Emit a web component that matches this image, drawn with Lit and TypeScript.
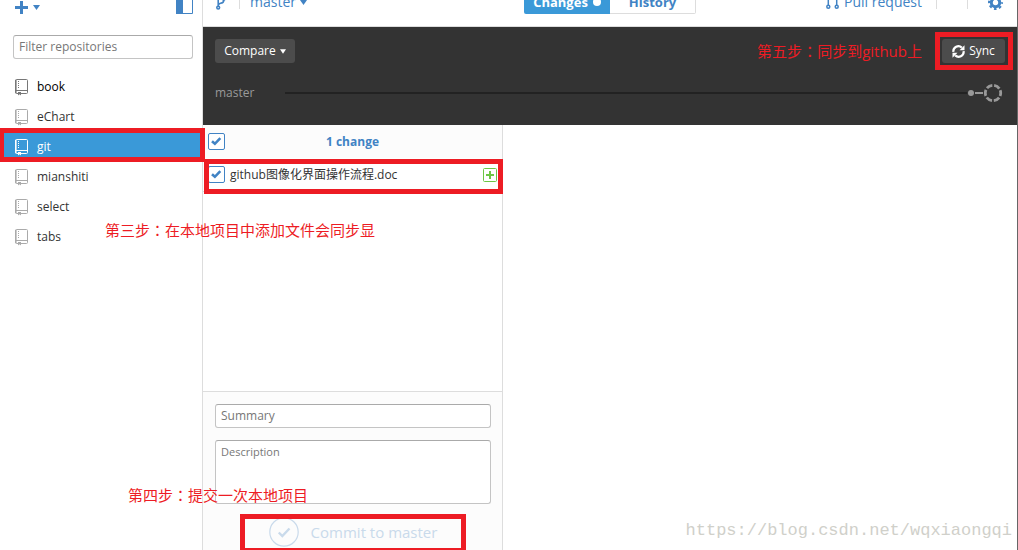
import { LitElement, html, css, svg } from "lit";
import { customElement, property, state } from "lit/decorators.js";
import { classMap } from "lit/directives/class-map.js";

const tick = svg`<path d="M4 8.2 L6.9 10.8 L12.3 5.2" fill="none" stroke="currentColor" stroke-width="2.6"/>`;

@customElement("repo-icon")
class RepoIcon extends LitElement {
  static styles = css`
    :host { display: block; width: 13px; height: 17px; }
    svg { display: block; }
  `;
  render() {
    return html`<svg width="13" height="17" viewBox="0 0 13 17" fill="none" stroke="currentColor" aria-hidden="true">
      <path d="M3 14.5 H1.5 Q0.5 14.5 0.5 13.5 V1.5 Q0.5 0.5 1.5 0.5 H11.5 Q12.5 0.5 12.5 1.5 V13.5 Q12.5 14.5 11.5 14.5 H6"/>
      <path d="M0.8 1 V14" stroke-width="1.6"/>
      <path d="M0.5 11.5 H12.5"/>
      <path d="M3.5 2 V10" stroke-dasharray="1 1"/>
      <path d="M3 13 H6 V16.6 L4.5 15.3 L3 16.6 Z" fill="currentColor" stroke="none"/>
    </svg>`;
  }
}

@customElement("check-box")
class CheckBox extends LitElement {
  @property() label = "";
  @state() private checked = true;
  static styles = css`
    :host { display: block; }
    label { display: grid; width: 17px; height: 17px; color: #4183c4; }
    input { grid-area: 1 / 1; appearance: none; margin: 0; box-sizing: border-box; width: 17px; height: 17px;
      border: 1px solid #4183c4; border-radius: 2px; background: #fff; }
    svg { grid-area: 1 / 1; pointer-events: none; z-index: 1; }
  `;
  render() {
    return html`<label>
      <input type="checkbox" aria-label=${this.label} .checked=${this.checked}
        @change=${(e: Event) => (this.checked = (e.target as HTMLInputElement).checked)} />
      ${this.checked ? html`<svg width="17" height="17" viewBox="0 0 17 17" aria-hidden="true">${tick}</svg>` : ""}
    </label>`;
  }
}

@customElement("app-root")
class AppRoot extends LitElement {
  @state() private selected = "git";
  private repos = ["book", "eChart", "git", "mianshiti", "select", "tabs"];

  static styles = css`
    :host { display: block; position: relative; height: 100vh; overflow: hidden; background: #fff; color: #333;
      font: 13px/20px "Open Sans", "Noto Sans CJK SC", sans-serif; }
    * { box-sizing: border-box; }
    button, input, textarea { font: inherit; margin: 0; }
    button { border: 0; background: none; padding: 0; color: inherit; }
    svg { display: block; flex: none; }
    .window { display: grid; grid-template-columns: 203px minmax(0, 1fr); height: calc(100% + 23px); margin-top: -23px;
      border-right: 1px solid #666; }
    .blue { color: #4183c4; }

    .sidebar { border-right: 1px solid #ddd; }
    .tools { display: flex; justify-content: space-between; align-items: end; height: 37px; padding: 0 9px 0 15px; }
    .add { display: flex; align-items: center; gap: 5px; height: 13px; }
    .filter { padding: 21px 9px 13px 13px; }
    .field { display: block; width: 100%; height: 24px; padding: 0 5px 1px; border: 1px solid #c4c4c4; border-top-color: #aaa;
      border-radius: 3px; background: #fff; color: #333; font-size: 12px; }
    .field::placeholder { color: #777; opacity: 1; }
    .repos { list-style: none; margin: 0; padding: 0; }
    .repo { display: flex; align-items: center; gap: 9px; width: 100%; height: 30px; padding: 0 15px; text-align: left;
      color: #333; font-size: 12px; }
    .repo repo-icon { color: #aaa; }
    .repo.first { color: #000; }
    .repo.first repo-icon { color: #777; }
    .repo.on { background: #3a99d8; color: #fff; }
    .repo.on repo-icon { color: #fff; }

    .main { display: flex; flex-direction: column; min-width: 0; }
    .topbar { display: grid; grid-template-columns: 1fr auto 1fr; align-items: center; flex: none; height: 50px;
      padding-top: 1px; border-bottom: 1px solid #ddd; font-size: 14px; color: #4183c4; }
    .left, .right { display: flex; align-items: center; }
    .left { padding-left: 13px; }
    .right { justify-content: flex-end; padding-right: 14px; }
    .rule { width: 1px; height: 14px; background: #ddd; }
    .branch { display: flex; align-items: center; gap: 4px; margin-left: 10px; }
    .branch-icon { margin-right: 13px; }
    .tabs { display: flex; }
    .tab { display: flex; align-items: center; justify-content: center; gap: 5px; width: 86px; height: 24px;
      border: 1px solid #ddd; border-left: 0; border-radius: 0 2px 2px 0; font-size: 13px; font-weight: 700; }
    .tab.on { border: 0; border-radius: 2px 0 0 2px; background: #3a99d8; color: #fff; }
    .pull { display: flex; align-items: center; gap: 5px; margin-right: 14px; }
    .right .rule + .rule { margin: 0 20px 0 30px; }

    .compare { flex: none; height: 98px; padding: 12px 12px 0; background: #333; color: #999; }
    .actions { display: flex; justify-content: space-between; }
    .dark { display: flex; align-items: center; justify-content: center; gap: 4px; height: 24px; border-radius: 3px;
      background: #4c4c4c; color: #fff; font-size: 12px; font-weight: 500; }
    .dark.cmp { width: 80px; }
    .dark.sync { width: 63px; }
    .graph { display: flex; align-items: center; height: 20px; margin-top: 20px; font-size: 12px; padding-right: 2px; }
    .graph .name { width: 70px; }
    .line { flex: 1; height: 2px; background: #222; }

    .body { flex: 1; display: grid; grid-template-columns: 300px minmax(0, 1fr); min-height: 0; }
    .changes { display: flex; flex-direction: column; border-right: 1px solid #ddd; }
    .head, .file { display: flex; align-items: center; padding: 0 5px; }
    .head { height: 33px; background: #fcfcfc; }
    .head .count { flex: 1; text-align: center; padding-right: 17px; font-weight: 700; font-size: 12px; color: #4183c4; }
    .file { height: 34px; border-bottom: 1px solid #ddd; gap: 5px; font-size: 12px; }
    .file .path { flex: 1; }
    .list { flex: 1; }
    .commit { display: grid; gap: 12px; padding: 12px 11px 2px 12px; border-top: 1px solid #ddd; background: #fcfcfc; }
    .commit textarea { height: 64px; padding: 1px 5px; resize: none; font-size: 11px; }
    .submit { display: flex; align-items: center; justify-content: center; gap: 12px; height: 32px; color: #c9daeb; font-size: 15px; }

    .note, .frame, .mark { position: absolute; pointer-events: none; white-space: nowrap; }
    .note { color: #ed1c24; font-size: 15px; line-height: 20px; }
    .colon { font-family: "Noto Sans CJK TC", sans-serif; }
    .frame { border: 5px solid #ed1c24; }
    .frame-repo { left: -1px; top: 128px; width: 206px; height: 34px; }
    .frame-file { left: 204px; top: 159px; width: 299px; height: 35px; }
    .frame-sync { right: 5px; top: 32px; width: 78px; height: 38px; }
    .frame-commit { left: 240px; bottom: -3px; width: 226px; height: 39px; }
    .note-file { left: 105px; top: 220px; }
    .note-commit { left: 128px; bottom: 45px; }
    .note-sync { right: 96px; top: 41px; }
    .mark { right: 6px; bottom: 9px; color: #d0d0ca; font: 17px/20px "Liberation Mono", monospace; }
  `;

  private caret(w = 7) {
    return html`<svg width=${w} height="5" viewBox="0 0 7 5" aria-hidden="true"><path d="M0 0 H7 L3.5 5 Z" fill="currentColor"/></svg>`;
  }

  private note(cls: string, step: string, text: string) {
    return html`<div class="note ${cls}">${step}<span class="colon">：</span>${text}</div>`;
  }

  render() {
    return html`
      <div class="window">
        <aside class="sidebar">
          <div class="tools blue">
            <button class="add" aria-label="Add repository">
              <svg width="13" height="13" viewBox="0 0 13 13"><path d="M5 0 H8 V5 H13 V8 H8 V13 H5 V8 H0 V5 H5 Z" fill="currentColor"/></svg>
              ${this.caret()}
            </button>
            <button aria-label="Toggle sidebar">
              <svg width="17" height="15" viewBox="0 0 17 15"><path d="M0.5 0.5 H16.5 V14.5 H0.5 Z" fill="none" stroke="currentColor"/><path d="M0 0 H7 V15 H0 Z" fill="currentColor"/></svg>
            </button>
          </div>
          <div class="filter"><input class="field" type="text" placeholder="Filter repositories" aria-label="Filter repositories" /></div>
          <ul class="repos">
            ${this.repos.map((r, i) => html`<li>
              <button class=${classMap({ repo: true, first: i === 0, on: r === this.selected })} @click=${() => (this.selected = r)}>
                <repo-icon></repo-icon><span>${r}</span>
              </button></li>`)}
          </ul>
        </aside>
        <main class="main">
          <header class="topbar">
            <div class="left">
              <svg class="branch-icon" width="10" height="16" viewBox="0 0 10 16" fill="none" stroke="currentColor" stroke-width="1.6" aria-hidden="true">
                <circle cx="2.2" cy="2.2" r="1.4"/><circle cx="7.8" cy="4.5" r="1.4"/><circle cx="2.2" cy="13.6" r="1.4"/>
                <path d="M2.2 3.8 V12 M7.8 6 Q7.8 9 4.5 9.3 Q2.2 9.8 2.2 12"/>
              </svg>
              <span class="rule"></span>
              <button class="branch">master ${this.caret()}</button>
            </div>
            <nav class="tabs">
              <button class="tab on">Changes
                <svg width="8" height="8" viewBox="0 0 8 8" aria-hidden="true"><circle cx="4" cy="4" r="4" fill="currentColor"/></svg>
              </button>
              <button class="tab">History</button>
            </nav>
            <div class="right">
              <button class="pull">
                <svg width="13" height="14" viewBox="0 0 13 14" fill="none" stroke="currentColor" stroke-width="1.5" aria-hidden="true">
                  <circle cx="2.3" cy="2.3" r="1.5"/><circle cx="2.3" cy="11.7" r="1.5"/><circle cx="10.7" cy="11.7" r="1.5"/>
                  <path d="M2.3 4 V10 M10.7 10 V4 Q10.7 2.3 9 2.3 H6.5 M8.5 0.3 L6.5 2.3 L8.5 4.3"/>
                </svg>
                Pull request
              </button>
              <span class="rule"></span><span class="rule"></span>
              <button aria-label="Settings">
                <svg width="15" height="15" viewBox="0 0 15 15" fill="none" stroke="currentColor">
                  <circle cx="7.5" cy="7.5" r="4.2" stroke-width="3"/>
                  <circle cx="7.5" cy="7.5" r="6.4" stroke-width="2.2" stroke-dasharray="2.6 2.43" stroke-dashoffset="1.3"/>
                </svg>
              </button>
            </div>
          </header>
          <section class="compare">
            <div class="actions">
              <button class="dark cmp">Compare ${this.caret(6)}</button>
              <button class="dark sync">
                <svg width="13" height="13" viewBox="0 0 13 13" aria-hidden="true">
                  <path d="M1.4 6.8 A5 5 0 0 1 9.8 2.6 M11.6 6.2 A5 5 0 0 1 3.2 10.4" fill="none" stroke="currentColor" stroke-width="2.2"/>
                  <path d="M12.5 0.3 V5.3 H7.5 Z M0.5 12.7 V7.7 H5.5 Z" fill="currentColor"/>
                </svg>
                Sync
              </button>
            </div>
            <div class="graph">
              <span class="name">master</span><span class="line"></span>
              <svg width="36" height="20" viewBox="0 0 36 20" fill="none" stroke="#999" aria-hidden="true">
                <circle cx="4" cy="10" r="3" fill="#999" stroke="none"/>
                <path d="M8 10 H16" stroke-width="2"/>
                <circle cx="26" cy="10" r="7.7" stroke-width="2.8" stroke-dasharray="6.2 1.864" stroke-dashoffset="3.1"/>
              </svg>
            </div>
          </section>
          <div class="body">
            <section class="changes">
              <div class="head"><check-box label="Select all changes"></check-box><span class="count">1 change</span></div>
              <div class="list">
                <div class="file">
                  <check-box label="github图像化界面操作流程.doc"></check-box>
                  <span class="path">github图像化界面操作流程.doc</span>
                  <svg width="14" height="14" viewBox="0 0 14 14" fill="none" stroke="#6cc644" aria-hidden="true"><rect x="0.5" y="0.5" width="13" height="13" rx="1"/><path d="M3 7 H11 M7 3 V11" stroke-width="2"/></svg>
                </div>
              </div>
              <form class="commit" @submit=${(e: Event) => e.preventDefault()}>
                <input class="field" type="text" placeholder="Summary" aria-label="Summary" />
                <textarea class="field" placeholder="Description" aria-label="Description"></textarea>
                <button class="submit" disabled>
                  <svg width="30" height="30" viewBox="0 0 30 30" fill="none" stroke="currentColor" aria-hidden="true"><circle cx="15" cy="15" r="14.2" stroke-width="1.2"/><path d="M9.8 15.5 L13.3 19 L20.5 11.5" stroke-width="2.4"/></svg>
                  Commit to master
                </button>
              </form>
            </section>
            <section></section>
          </div>
        </main>
      </div>
      <div class="frame frame-repo"></div>
      <div class="frame frame-file"></div>
      <div class="frame frame-sync"></div>
      <div class="frame frame-commit"></div>
      ${this.note("note-file", "第三步", "在本地项目中添加文件会同步显")}
      ${this.note("note-commit", "第四步", "提交一次本地项目")}
      ${this.note("note-sync", "第五步", "同步到github上")}
      <div class="mark">https://blog.csdn.net/wqxiaongqi</div>
    `;
  }
}
